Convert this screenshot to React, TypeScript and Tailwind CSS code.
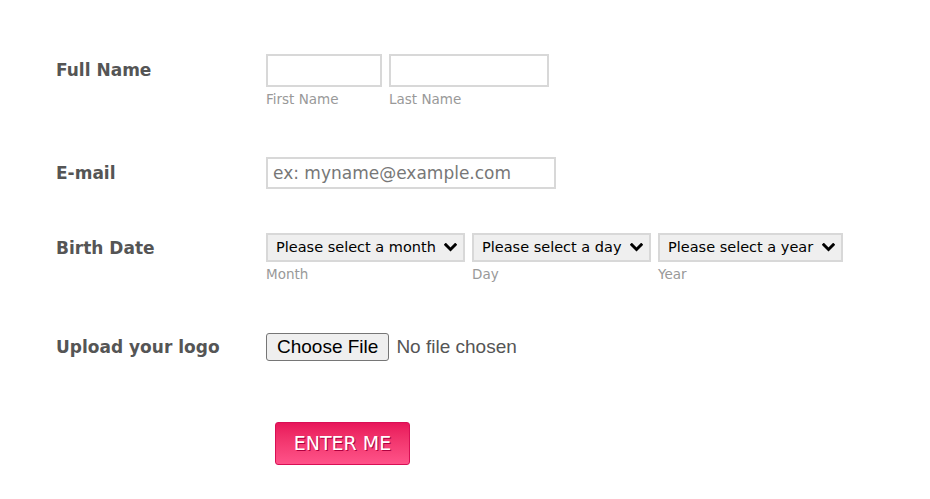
import React from 'react';

const Label = ({ children, h }: { children: React.ReactNode; h: string }) => (
  <div className={`w-[210px] shrink-0 flex items-center pt-[2px] ${h} text-[17px] font-bold text-[#555]`}>{children}</div>
);

const Sub = ({ children }: { children: React.ReactNode }) => (
  <div className="mt-[4px] h-[16px] leading-[16px] text-[13.5px] text-[#999]">{children}</div>
);

const Select = ({ text, w }: { text: string; w: string }) => (
  <div className={`relative ${w}`}>
    <select className="block h-[29px] w-full appearance-none rounded-none border-2 border-[#d8d8d8] bg-[#efefef] pl-[8px] pr-[24px] text-[14.5px] text-black">
      <option>{text}</option>
    </select>
    <svg
      className="pointer-events-none absolute right-[8px] top-[10px]"
      width="13"
      height="10"
      viewBox="0 0 13 10"
    >
      <path d="M1.8 1.8 L6.5 6.5 L11.2 1.8" fill="none" stroke="#000" strokeWidth="3" strokeLinecap="square" />
    </svg>
  </div>
);

export default function App() {
  return (
    <div className="min-h-[499px] bg-white pt-[54px] pl-[56px] font-['DejaVu_Sans',Verdana,sans-serif]">
      <div className="flex items-start">
        <Label h="h-[32px]">Full Name</Label>
        <div className="flex gap-[7px]">
          <div>
            <input className="block h-[33px] w-[116px] border-2 border-[#d8d8d8] bg-white" />
            <Sub>First Name</Sub>
          </div>
          <div>
            <input className="block h-[33px] w-[160px] border-2 border-[#d8d8d8] bg-white" />
            <Sub>Last Name</Sub>
          </div>
        </div>
      </div>

      <div className="flex items-start mt-[50px]">
        <Label h="h-[32px]">E-mail</Label>
        <input
          placeholder="ex: myname@example.com"
          className="block h-[32px] w-[290px] border-2 border-[#d8d8d8] bg-white px-[5px] text-[17px] placeholder:text-[#777]"
        />
      </div>

      <div className="flex items-start mt-[44px]">
        <Label h="h-[29px]">Birth Date</Label>
        <div className="flex gap-[7px]">
          <div>
            <Select text="Please select a month" w="w-[199px]" />
            <Sub>Month</Sub>
          </div>
          <div>
            <Select text="Please select a day" w="w-[179px]" />
            <Sub>Day</Sub>
          </div>
          <div>
            <Select text="Please select a year" w="w-[185px]" />
            <Sub>Year</Sub>
          </div>
        </div>
      </div>

      <div className="flex items-start mt-[51px]">
        <Label h="h-[28px]">Upload your logo</Label>
        <input
          type="file"
          className="block h-[28px] text-[19px] leading-[22px] text-[#555] font-['Liberation_Sans',Arial,sans-serif] file:mr-[7px] file:h-[28px] file:rounded-[3px] file:border file:border-[#767676] file:bg-[#efefef] file:px-[10px] file:text-black"
        />
      </div>

      <div className="mt-[61px] pl-[219px]">
        <button className="block h-[43px] w-[135px] rounded-[3px] border border-[#d80f55] bg-gradient-to-b from-[#e8145a] to-[#ff5289] text-[19px] text-white [text-shadow:1px_1px_0_#b00040]">
          ENTER ME
        </button>
      </div>
    </div>
  );
}
